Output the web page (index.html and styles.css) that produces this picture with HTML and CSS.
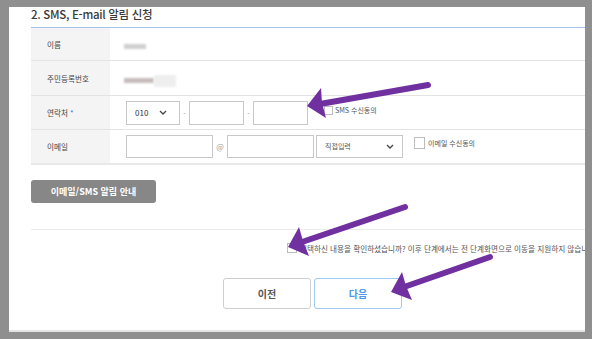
FILE: index.html
```html
<!DOCTYPE html>
<html lang="ko">
<head>
    <meta charset="UTF-8">
    <meta name="viewport" content="width=device-width, initial-scale=1.0">
    <title>SMS, E-mail 알림 신청</title>
    <link rel="stylesheet" href="styles.css">
</head>
<body>

<div class="frame">
    <div class="content">
        <h2 class="title">2. SMS, E-mail 알림 신청</h2>

        <table class="form-table">
            <tr class="row-name">
                <th>이름</th>
                <td><span class="blur blur-name"></span></td>
            </tr>
            <tr class="row-rrn">
                <th>주민등록번호</th>
                <td><span class="blur blur-rrn"></span><span class="blur blur-rrn2"></span></td>
            </tr>
            <tr class="row-phone">
                <th>연락처 <em>*</em></th>
                <td>
                    <div class="field-line">
                        <div class="select select-phone">
                            <span>010</span>
                            <svg class="chevron" width="8" height="5" viewBox="0 0 8 5"><polyline points="1,1 4,4 7,1"/></svg>
                        </div>
                        <span class="sep">-</span>
                        <input class="input input-phone" type="text">
                        <span class="sep">-</span>
                        <input class="input input-phone" type="text">
                        <label class="agree agree-sms"><span class="check"></span>SMS 수신동의</label>
                    </div>
                </td>
            </tr>
            <tr class="row-mail">
                <th>이메일</th>
                <td>
                    <div class="field-line">
                        <input class="input input-mail" type="text">
                        <span class="sep sep-at">@</span>
                        <input class="input input-mail" type="text">
                        <div class="select select-domain">
                            <span>직접입력</span>
                            <svg class="chevron" width="8" height="5" viewBox="0 0 8 5"><polyline points="1,1 4,4 7,1"/></svg>
                        </div>
                        <label class="agree agree-mail"><span class="check check-big"></span>이메일 수신동의</label>
                    </div>
                </td>
            </tr>
        </table>

        <button class="guide-btn">이메일/SMS 알림 안내</button>

        <hr class="divider">

        <div class="confirm">
            <span class="check"></span>
            <span>선택하신 내용을 확인하셨습니까? 이후 단계에서는 전 단계화면으로 이동을 지원하지 않습니다.</span>
        </div>

        <div class="actions">
            <button class="btn">이전</button>
            <button class="btn btn-next">다음</button>
        </div>
    </div>
</div>

<!-- annotation arrows drawn over the screenshot -->
<svg class="arrows" width="592" height="339" viewBox="0 0 592 339">
    <g fill="#7030a0" stroke="#7030a0" stroke-width="6" stroke-linecap="round">
        <line x1="428" y1="85" x2="320" y2="104"/>
        <polygon stroke="none" points="307,106 321,88 322,103 326,118"/>

        <line x1="405" y1="207" x2="302" y2="242"/>
        <polygon stroke="none" points="288,247 299,227 303,241 309,256"/>

        <line x1="490" y1="257" x2="404" y2="287"/>
        <polygon stroke="none" points="391,292 402,272 406,286 412,300"/>
    </g>
</svg>

</body>
</html>
```

FILE: styles.css
```css
body {
    margin: 0;
    position: relative;
    height: 339px;
    overflow: hidden;
    background: #8f8f8f;
    font-family: "Noto Sans CJK KR", "Noto Sans", sans-serif;
    color: #444;
}

.frame {
    margin: 7px 7px 0 9px;
    height: 325px;
    box-sizing: border-box;
    background: #fff;
    border-bottom: 2px solid #e4e4e4;
    overflow: hidden;
}

.content {
    width: 640px;
    padding-left: 22px;
}

.title {
    margin: 0;
    height: 20px;
    font-size: 11.5px;
    line-height: 15px;
    font-weight: 500;
    letter-spacing: -0.3px;
    color: #3a3a3a;
}

/* form table */
.form-table {
    width: 620px;
    border-collapse: collapse;
    border-top: 1px solid #a7c2e8;
    border-bottom: 2px solid #e8e8e8;
}

.form-table th,
.form-table td {
    padding: 0 0 0 16px;
    border-bottom: 1px solid #e3e3e3;
    vertical-align: middle;
}

.form-table th {
    box-sizing: border-box;
    width: 79px;
    background: #f4f4f4;
    text-align: left;
    font-size: 7.6px;
    font-weight: normal;
    color: #444;
}

.form-table th em {
    font-style: normal;
    color: #3a6fd8;
}

.row-name { height: 33px; }
.row-rrn { height: 35px; }
.row-phone { height: 34px; }
.row-mail { height: 34px; }

.blur {
    display: inline-block;
    vertical-align: middle;
    filter: blur(1.2px);
}

.blur-name {
    width: 22px;
    height: 5px;
    margin-left: -2px;
    background: #cfcfcf;
}

.blur-rrn {
    width: 30px;
    height: 5px;
    margin-left: -2px;
    background: #c6bcbc;
}

.blur-rrn2 {
    width: 22px;
    height: 12px;
    background: #eeeeee;
}

.field-line {
    display: flex;
    align-items: center;
}

.select {
    display: flex;
    align-items: center;
    box-sizing: border-box;
    height: 24px;
    border: 1px solid #c8c8c8;
    background: #fff;
}

.select-phone {
    width: 54px;
    padding-left: 8px;
    font-size: 8px;
    color: #333;
}

.select-domain {
    width: 87px;
    height: 23px;
    margin-left: 2px;
    padding-left: 8px;
    font-size: 7px;
    color: #555;
}

.chevron {
    margin-left: auto;
    margin-right: 12px;
    fill: none;
    stroke: #444;
    stroke-width: 1.3;
}

.select-domain .chevron {
    margin-right: 8px;
}

.input {
    box-sizing: border-box;
    height: 24px;
    margin: 0;
    padding: 0;
    border: 1px solid #c8c8c8;
    background: #fff;
}

.input-phone {
    width: 55px;
}

.input-mail {
    width: 87px;
    height: 23px;
}

.sep {
    width: 9px;
    text-align: center;
    font-size: 7px;
    color: #999;
}

.sep-at {
    width: 14px;
    font-size: 8px;
}

.agree {
    display: flex;
    align-items: center;
    gap: 3px;
    font-size: 7px;
    color: #555;
}

.agree-sms {
    margin-left: 16px;
    margin-bottom: 5px;
    gap: 2px;
}

.agree-mail {
    margin-left: 11px;
    margin-bottom: 6px;
}

.check {
    display: inline-block;
    box-sizing: border-box;
    width: 9px;
    height: 9px;
    border: 1px solid #bdbdbd;
    background: #fff;
}

.check-big {
    width: 11px;
    height: 12px;
}

/* below the table */
.guide-btn {
    display: block;
    width: 125px;
    height: 23px;
    margin-top: 15px;
    padding: 0;
    border: none;
    border-radius: 3px;
    background: #878787;
    color: #fff;
    font-family: inherit;
    font-size: 9px;
    font-weight: bold;
}

.divider {
    width: 620px;
    height: 0;
    margin: 26px 0 0;
    border: none;
    border-top: 1px solid #ececec;
}

.confirm {
    display: flex;
    align-items: center;
    gap: 3px;
    margin-top: 13px;
    padding-left: 256px;
    white-space: nowrap;
    font-size: 7.6px;
    color: #555;
}

.confirm .check {
    width: 10px;
    height: 10px;
}

.actions {
    display: flex;
    gap: 3px;
    margin-top: 24px;
    padding-left: 192px;
}

.btn {
    width: 88px;
    height: 31px;
    padding: 0;
    border: 1px solid #cfcfcf;
    border-radius: 3px;
    background: #fff;
    color: #555;
    font-family: inherit;
    font-size: 10px;
    font-weight: bold;
}

.btn-next {
    border-color: #9ccaf5;
    color: #4d96e8;
}

.arrows {
    position: absolute;
    top: 0;
    left: 0;
    pointer-events: none;
}
```
